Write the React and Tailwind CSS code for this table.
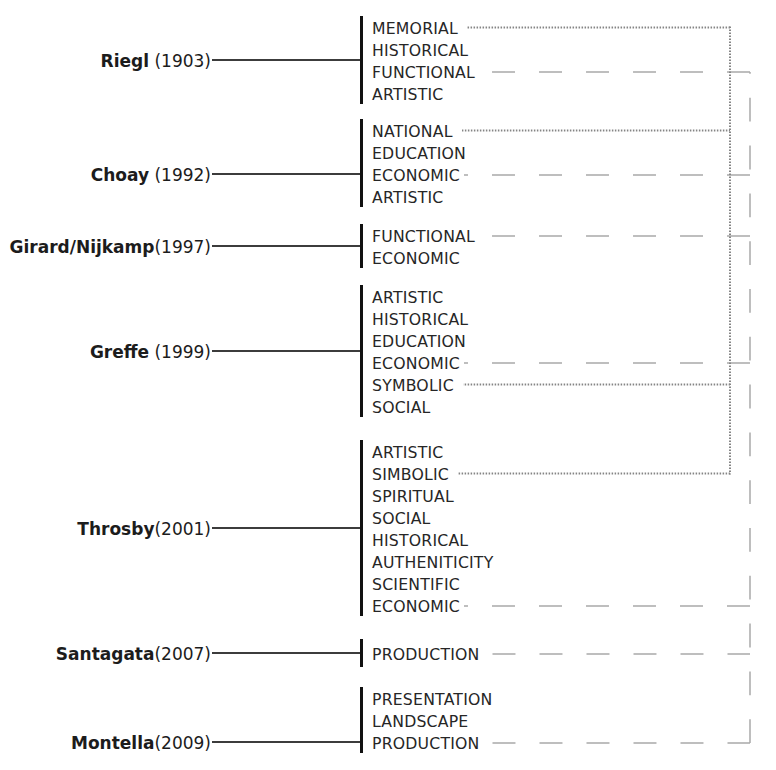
import React from "react";

const groups = [
  {
    name: "Riegl",
    year: " (1903)",
    mt: "mt-0",
    label: "self-center",
    items: [
      { t: "MEMORIAL", c: "dot" },
      { t: "HISTORICAL" },
      { t: "FUNCTIONAL", c: "dash" },
      { t: "ARTISTIC" },
    ],
  },
  {
    name: "Choay",
    year: " (1992)",
    mt: "mt-[15px]",
    label: "self-start mt-[44px]",
    items: [
      { t: "NATIONAL", c: "dot" },
      { t: "EDUCATION" },
      { t: "ECONOMIC", c: "dash" },
      { t: "ARTISTIC" },
    ],
  },
  {
    name: "Girard/Nijkamp",
    year: "(1997)",
    mt: "mt-[17px]",
    label: "self-center",
    items: [{ t: "FUNCTIONAL", c: "dash" }, { t: "ECONOMIC" }],
  },
  {
    name: "Greffe",
    year: " (1999)",
    mt: "mt-[17px]",
    label: "self-center",
    items: [
      { t: "ARTISTIC" },
      { t: "HISTORICAL" },
      { t: "EDUCATION" },
      { t: "ECONOMIC", c: "dash" },
      { t: "SYMBOLIC", c: "dot" },
      { t: "SOCIAL" },
    ],
  },
  {
    name: "Throsby",
    year: "(2001)",
    mt: "mt-[23px]",
    label: "self-center",
    items: [
      { t: "ARTISTIC" },
      { t: "SIMBOLIC", c: "dot" },
      { t: "SPIRITUAL" },
      { t: "SOCIAL" },
      { t: "HISTORICAL" },
      { t: "AUTHENITICITY" },
      { t: "SCIENTIFIC" },
      { t: "ECONOMIC", c: "dash" },
    ],
  },
  {
    name: "Santagata",
    year: "(2007)",
    mt: "mt-[23px]",
    label: "self-center",
    rowH: "h-[28px]",
    items: [{ t: "PRODUCTION", c: "dash" }],
  },
  {
    name: "Montella",
    year: "(2009)",
    mt: "mt-[20px]",
    label: "self-end",
    items: [
      { t: "PRESENTATION" },
      { t: "LANDSCAPE" },
      { t: "PRODUCTION", c: "dash" },
    ],
  },
];

function Connector({ kind }) {
  if (kind === "dash") {
    return (
      <svg className="flex-1 h-[10px] ml-[4px]">
        <line
          x1="100%"
          y1="6"
          x2="0"
          y2="6"
          stroke="#a9a9a9"
          strokeWidth="1.5"
          strokeDasharray="23 24"
        />
      </svg>
    );
  }
  return (
    <svg className="flex-1 h-[10px] ml-[9px] mr-[20px]">
      <line
        x1="100%"
        y1="5.5"
        x2="0"
        y2="5.5"
        stroke="#858585"
        strokeWidth="2"
        strokeDasharray="1.5 1.5"
      />
    </svg>
  );
}

function Group({ g }) {
  const rowH = g.rowH || "h-[22px]";
  return (
    <div className={`flex ${g.mt}`}>
      <div className="w-[360px] flex">
        <div className={`flex items-center h-[22px] w-full ${g.label}`}>
          <span className="w-[211px] text-right whitespace-nowrap text-[17px] text-[#1c1c1c] leading-none pt-[2px]">
            <span className="font-bold">{g.name}</span>
            <span>{g.year}</span>
          </span>
          <div className="flex-1 h-[1.5px] bg-[#3c3c3c] ml-[1px]" />
        </div>
      </div>
      <div className="w-[3px] bg-[#111]" />
      <div className="flex flex-col pl-[9px] w-[387px]">
        {g.items.map((it, i) => (
          <div key={i} className={`flex items-center ${rowH} w-full`}>
            <span className="whitespace-nowrap text-[15.7px] text-[#262626] leading-none pt-[4px] tracking-[0.2px]">
              {it.t}
            </span>
            {it.c ? <Connector kind={it.c} /> : null}
          </div>
        ))}
      </div>
    </div>
  );
}

export default function App() {
  return (
    <div
      className="relative w-[776px] h-[770px] bg-white pt-[16px] overflow-hidden"
      style={{ fontFamily: '"DejaVu Sans", sans-serif' }}
    >
      {groups.map((g, i) => (
        <Group key={i} g={g} />
      ))}
      <svg
        className="absolute left-0 top-0 pointer-events-none"
        width="776"
        height="770"
      >
        <line
          x1="730"
          y1="26.5"
          x2="730"
          y2="474.5"
          stroke="#858585"
          strokeWidth="2"
          strokeDasharray="1.5 1.5"
        />
        <line
          x1="750"
          y1="743"
          x2="750"
          y2="72"
          stroke="#a9a9a9"
          strokeWidth="1.5"
          strokeDasharray="23.8 24"
        />
      </svg>
    </div>
  );
}
